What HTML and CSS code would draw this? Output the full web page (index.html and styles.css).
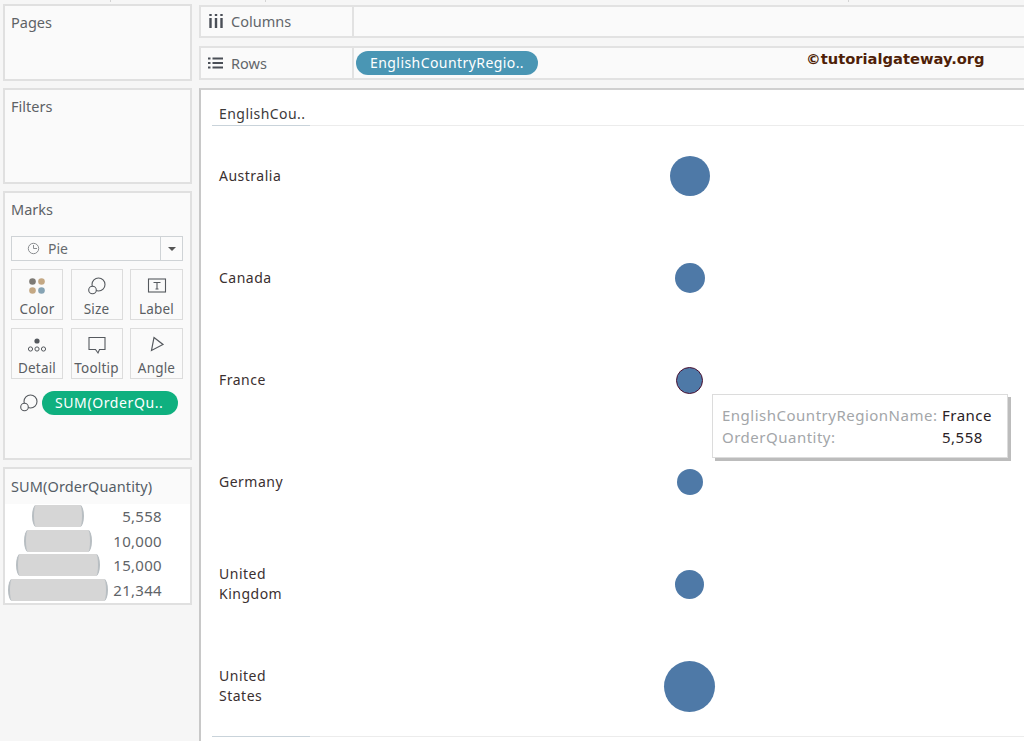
FILE: index.html
```html
<!DOCTYPE html>
<html lang="en">
<head>
<meta charset="utf-8">
<title>Tableau pie marks</title>
<link rel="stylesheet" href="styles.css">
</head>
<body>
<i class="tick t1"></i><i class="tick t2"></i><i class="tick t3"></i>
<div class="app">
  <aside class="side">
    <section class="card pages"><h2 class="card-title">Pages</h2></section>
    <section class="card filters"><h2 class="card-title">Filters</h2></section>
    <section class="card marks">
      <h2 class="card-title">Marks</h2>
      <div class="mark-type">
        <span class="mark-type-name">
          <svg class="pie-ico" width="13" height="13" viewBox="0 0 13 13"><circle cx="6.5" cy="6.5" r="5.2" fill="none" stroke="#8a8d90" stroke-width="1"/><path d="M6.5 6.5V3M6.5 6.5H10" fill="none" stroke="#8a8d90" stroke-width="1"/></svg>
          Pie
        </span>
        <span class="mark-type-arrow"><i class="caret"></i></span>
      </div>
      <div class="mark-grid">
        <div class="mark-btn">
          <svg width="20" height="20" viewBox="0 0 20 20"><circle cx="5.5" cy="5.5" r="3.3" fill="#7d7a75"/><circle cx="14.5" cy="5.5" r="3.3" fill="#c4a884"/><circle cx="5.5" cy="14.5" r="3.3" fill="#c4a884"/><circle cx="14.5" cy="14.5" r="3.3" fill="#86a3b4"/></svg>
          <span>Color</span>
        </div>
        <div class="mark-btn">
          <svg width="20" height="20" viewBox="0 0 20 20"><circle cx="11.5" cy="8.5" r="6.5" fill="none" stroke="#55595e" stroke-width="1.1"/><circle cx="5.5" cy="14" r="3.8" fill="#fafafa" stroke="#55595e" stroke-width="1.1"/></svg>
          <span>Size</span>
        </div>
        <div class="mark-btn">
          <svg width="20" height="20" viewBox="0 0 20 20"><rect x="1.5" y="3" width="17" height="13" fill="none" stroke="#55595e" stroke-width="1.1"/><path d="M6.5 6.5h7M10 6.5v6.5M8.5 13h3" fill="none" stroke="#55595e" stroke-width="1.1"/></svg>
          <span>Label</span>
        </div>
        <div class="mark-btn">
          <svg width="20" height="20" viewBox="0 0 20 20"><circle cx="10" cy="6" r="2.6" fill="#55595e"/><circle cx="3.5" cy="14" r="2.1" fill="none" stroke="#55595e"/><circle cx="10" cy="14" r="2.1" fill="none" stroke="#55595e"/><circle cx="16.5" cy="14" r="2.1" fill="none" stroke="#55595e"/></svg>
          <span>Detail</span>
        </div>
        <div class="mark-btn">
          <svg width="20" height="20" viewBox="0 0 20 20"><path d="M2 2.5h16v12h-5.5l-1.5 3.5-2.5-3.5H2z" fill="none" stroke="#55595e" stroke-width="1.1"/></svg>
          <span>Tooltip</span>
        </div>
        <div class="mark-btn">
          <svg width="20" height="20" viewBox="0 0 20 20"><path d="M7 2.5l9 7-11.5 6z" fill="none" stroke="#55595e" stroke-width="1.2"/></svg>
          <span>Angle</span>
        </div>
      </div>
      <div class="mark-pill-row">
        <svg width="20" height="20" viewBox="0 0 20 20"><circle cx="11.5" cy="8.5" r="6.5" fill="none" stroke="#55595e" stroke-width="1.1"/><circle cx="5.5" cy="14" r="3.8" fill="#fafafa" stroke="#55595e" stroke-width="1.1"/></svg>
        <span class="pill pill-green">SUM(OrderQu..</span>
      </div>
    </section>
    <section class="card legend">
      <h2 class="card-title legend-title">SUM(OrderQuantity)</h2>
      <div class="legend-rows">
        <div class="legend-row"><span class="legend-cell"><i class="legend-shape s1"></i></span><span class="legend-val">5,558</span></div>
        <div class="legend-row"><span class="legend-cell"><i class="legend-shape s2"></i></span><span class="legend-val">10,000</span></div>
        <div class="legend-row"><span class="legend-cell"><i class="legend-shape s3"></i></span><span class="legend-val">15,000</span></div>
        <div class="legend-row"><span class="legend-cell"><i class="legend-shape s4"></i></span><span class="legend-val">21,344</span></div>
      </div>
    </section>
  </aside>
  <main class="main">
    <div class="shelf shelf-cols">
      <div class="shelf-label">
        <svg class="shelf-ico" width="16" height="14" viewBox="0 0 16 14"><path d="M2.5 0v2M8 0v2M13.5 0v2M2.5 4v10M8 4v10M13.5 4v10" fill="none" stroke="#4a4f57" stroke-width="2.4"/></svg>
        Columns
      </div>
      <div class="shelf-body"></div>
    </div>
    <div class="shelf shelf-rows">
      <div class="shelf-label">
        <svg class="shelf-ico" width="16" height="14" viewBox="0 0 16 14"><path d="M0 2.5h2.5M4.5 2.5H15M0 7h2.5M4.5 7H15M0 11.5h2.5M4.5 11.5H15" fill="none" stroke="#4a4f57" stroke-width="2"/></svg>
        Rows
      </div>
      <div class="shelf-body">
        <span class="pill pill-blue">EnglishCountryRegio..</span>
        <span class="watermark">©tutorialgateway.org</span>
      </div>
    </div>
    <div class="viz">
      <div class="viz-head"><span class="viz-head-cell">EnglishCou..</span></div>
      <div class="viz-rows">
        <div class="viz-row"><span class="viz-label">Australia</span><span class="viz-mark"><i class="dot d-au"></i></span></div>
        <div class="viz-row"><span class="viz-label">Canada</span><span class="viz-mark"><i class="dot d-ca"></i></span></div>
        <div class="viz-row"><span class="viz-label">France</span><span class="viz-mark"><i class="dot d-fr"></i></span></div>
        <div class="viz-row"><span class="viz-label">Germany</span><span class="viz-mark"><i class="dot d-de"></i></span></div>
        <div class="viz-row"><span class="viz-label">United<br>Kingdom</span><span class="viz-mark"><i class="dot d-uk"></i></span></div>
        <div class="viz-row"><span class="viz-label">United<br>States</span><span class="viz-mark"><i class="dot d-us"></i></span></div>
      </div>
      <div class="viz-foot"></div>
      <div class="tooltip">
        <span class="tip-key">EnglishCountryRegionName:</span><span class="tip-val">France</span>
        <span class="tip-key">OrderQuantity:</span><span class="tip-val">5,558</span>
      </div>
    </div>
  </main>
</div>
</body>
</html>
```

FILE: styles.css
```css
* { box-sizing: border-box; }
html, body { margin: 0; height: 100%; overflow: hidden; }
body {
  background: #f6f6f6;
  font-family: "Noto Sans", "Open Sans", sans-serif;
  font-size: 14px;
  color: #555a60;
}
.tick {
  position: absolute;
  top: 0;
  width: 1px;
  height: 2px;
  background: #d4d4d4;
}
.t1 { left: 110px; }
.t2 { left: 265px; }
.t3 { left: 848px; }
.app {
  display: flex;
  height: 741px;
  padding: 4px 0 0 3px;
  gap: 7px;
}
.side {
  width: 189px;
  flex: none;
  display: flex;
  flex-direction: column;
  gap: 7px;
}
.card {
  background: #fafafa;
  border: 2px solid #e0e0e0;
}
.card-title {
  margin: 0;
  font-size: 14.5px;
  font-weight: 400;
  line-height: 20px;
  color: #5e6266;
  padding: 6px 0 0 6px;
}
.pages { height: 77px; }
.filters { height: 96px; }
.marks { height: 269px; padding: 0; }
.mark-type {
  margin: 17px 7px 0 6px;
  height: 25px;
  border: 1px solid #cfd3d6;
  display: flex;
  background: #fbfbfb;
}
.mark-type-name {
  flex: 1;
  display: flex;
  align-items: center;
  gap: 8px;
  padding-left: 15px;
  font-size: 14px;
  color: #666a6e;
}
.mark-type-arrow {
  width: 22px;
  border-left: 1px solid #cfd3d6;
  display: flex;
  align-items: center;
  justify-content: center;
}
.caret {
  width: 0;
  height: 0;
  border-left: 4px solid transparent;
  border-right: 4px solid transparent;
  border-top: 4px solid #555;
}
.mark-grid {
  margin: 8px 6px 0;
  display: grid;
  grid-template-columns: 52px 52px 53px;
  grid-auto-rows: 51px;
  column-gap: 7.5px;
  row-gap: 8px;
}
.mark-btn {
  border: 1px solid #dcdcdc;
  display: flex;
  flex-direction: column;
  align-items: center;
  padding-top: 6px;
  font-size: 13.5px;
  line-height: 18px;
  color: #5a5e63;
  gap: 4px;
  letter-spacing: 0.2px;
}
.mark-pill-row {
  display: flex;
  align-items: center;
  gap: 3px;
  margin: 12px 0 0 14px;
}
.pill {
  display: inline-block;
  color: #fff;
  border-radius: 12px;
  white-space: nowrap;
  font-size: 14px;
  line-height: 24px;
  height: 24px;
}
.pill-green { background: #0fb07f; width: 136px; padding-left: 13px; letter-spacing: 0.6px; }
.pill-blue { background: #4a96b4; width: 182px; padding-left: 14px; letter-spacing: 0.43px; }
.legend { height: 138px; display: flex; flex-direction: column; background: #fff; }
.legend-title { background: #fafafa; height: 35px; padding-top: 7px; color: #555d66; letter-spacing: 0.1px; }
.legend-rows { display: flex; flex-direction: column; gap: 2.6px; padding-top: 1px; }
.legend-row { display: flex; height: 22px; align-items: center; }
.legend-cell { width: 106px; display: flex; justify-content: center; }
.legend-shape {
  display: block;
  height: 22px;
  background: #d6d6d6;
  border-left: 2px solid #b8bec2;
  border-right: 2px solid #b8bec2;
  border-radius: 4px / 50%;
}
.s1 { width: 52px; }
.s2 { width: 68px; }
.s3 { width: 84px; }
.s4 { width: 100px; }
.legend-val { width: 51px; text-align: right; color: #5f6468; font-size: 15px; letter-spacing: 0.3px; }
.main {
  flex: 1;
  min-width: 0;
  display: flex;
  flex-direction: column;
  margin-right: -2px;
}
.shelf {
  display: flex;
  background: #fafafa;
  border: 2px solid #e2e2e2;
  border-right: 0;
}
.shelf-cols { height: 33px; margin-top: 1px; }
.shelf-rows { height: 34px; margin-top: 8px; }
.shelf-label {
  width: 153px;
  flex: none;
  display: flex;
  align-items: center;
  gap: 7px;
  padding-left: 7px;
  border-right: 2px solid #e2e2e2;
  font-size: 14.5px;
  color: #62666a;
}
.shelf-cols .shelf-label { padding-bottom: 2px; }
.shelf-body {
  flex: 1;
  display: flex;
  align-items: center;
  padding-left: 2px;
}
.watermark {
  margin-left: 268px;
  margin-top: -10px;
  font-family: "DejaVu Sans", sans-serif;
  font-weight: 700;
  font-size: 14.7px;
  color: #4f1f08;
  white-space: nowrap;
}
.viz {
  position: relative;
  flex: 1;
  margin-top: 8px;
  background: #fff;
  border-left: 2px solid #c8c8c8;
  border-top: 2px solid #d0d0d0;
  padding-left: 11px;
  overflow: hidden;
}
.viz-head {
  height: 36px;
  border-bottom: 1px solid #ececec;
}
.viz-head-cell {
  display: block;
  width: 98px;
  height: 36px;
  border-bottom: 1px solid #c9d3da;
  padding: 14px 0 0 7px;
  font-size: 14px;
  line-height: 20px;
  letter-spacing: 0.45px;
  color: #3c3a3a;
}
.viz-rows { display: flex; flex-direction: column; margin-top: -1px; }
.viz-row { height: 102px; display: flex; align-items: center; }
.viz-label {
  width: 438px;
  flex: none;
  padding-left: 7px;
  font-size: 14px;
  line-height: 20px;
  letter-spacing: 0.5px;
  color: #3b3030;
}
.viz-mark { width: 80px; display: flex; justify-content: center; }
.dot { display: block; border-radius: 50%; background: #4e79a7; }
.d-au { width: 40px; height: 40px; }
.d-ca { width: 30px; height: 30px; }
.d-fr { width: 27px; height: 27px; border: 1px solid #4a1030; margin-left: -1px; }
.d-de { width: 26px; height: 26px; }
.d-uk { width: 29px; height: 29px; margin-left: -1px; }
.d-us { width: 51px; height: 51px; margin-left: -1px; }
.viz-foot {
  height: 1px;
  background: #ececec;
  margin-top: -1px;
  box-shadow: inset 98px 0 0 #c9d3da;
}
.tooltip {
  position: absolute;
  left: 511px;
  top: 304px;
  width: 296px;
  height: 64px;
  background: #fff;
  border: 1px solid #dcdcdc;
  box-shadow: 3px 3px 0 #bcbcbc;
  padding: 9px 0 0 9px;
  display: grid;
  grid-template-columns: 220px auto;
  grid-auto-rows: 22px;
  font-size: 15px;
  line-height: 22px;
  letter-spacing: 0.5px;
}
.tip-key { color: #a3a6a9; }
.tip-val { color: #2a2226; }
```
